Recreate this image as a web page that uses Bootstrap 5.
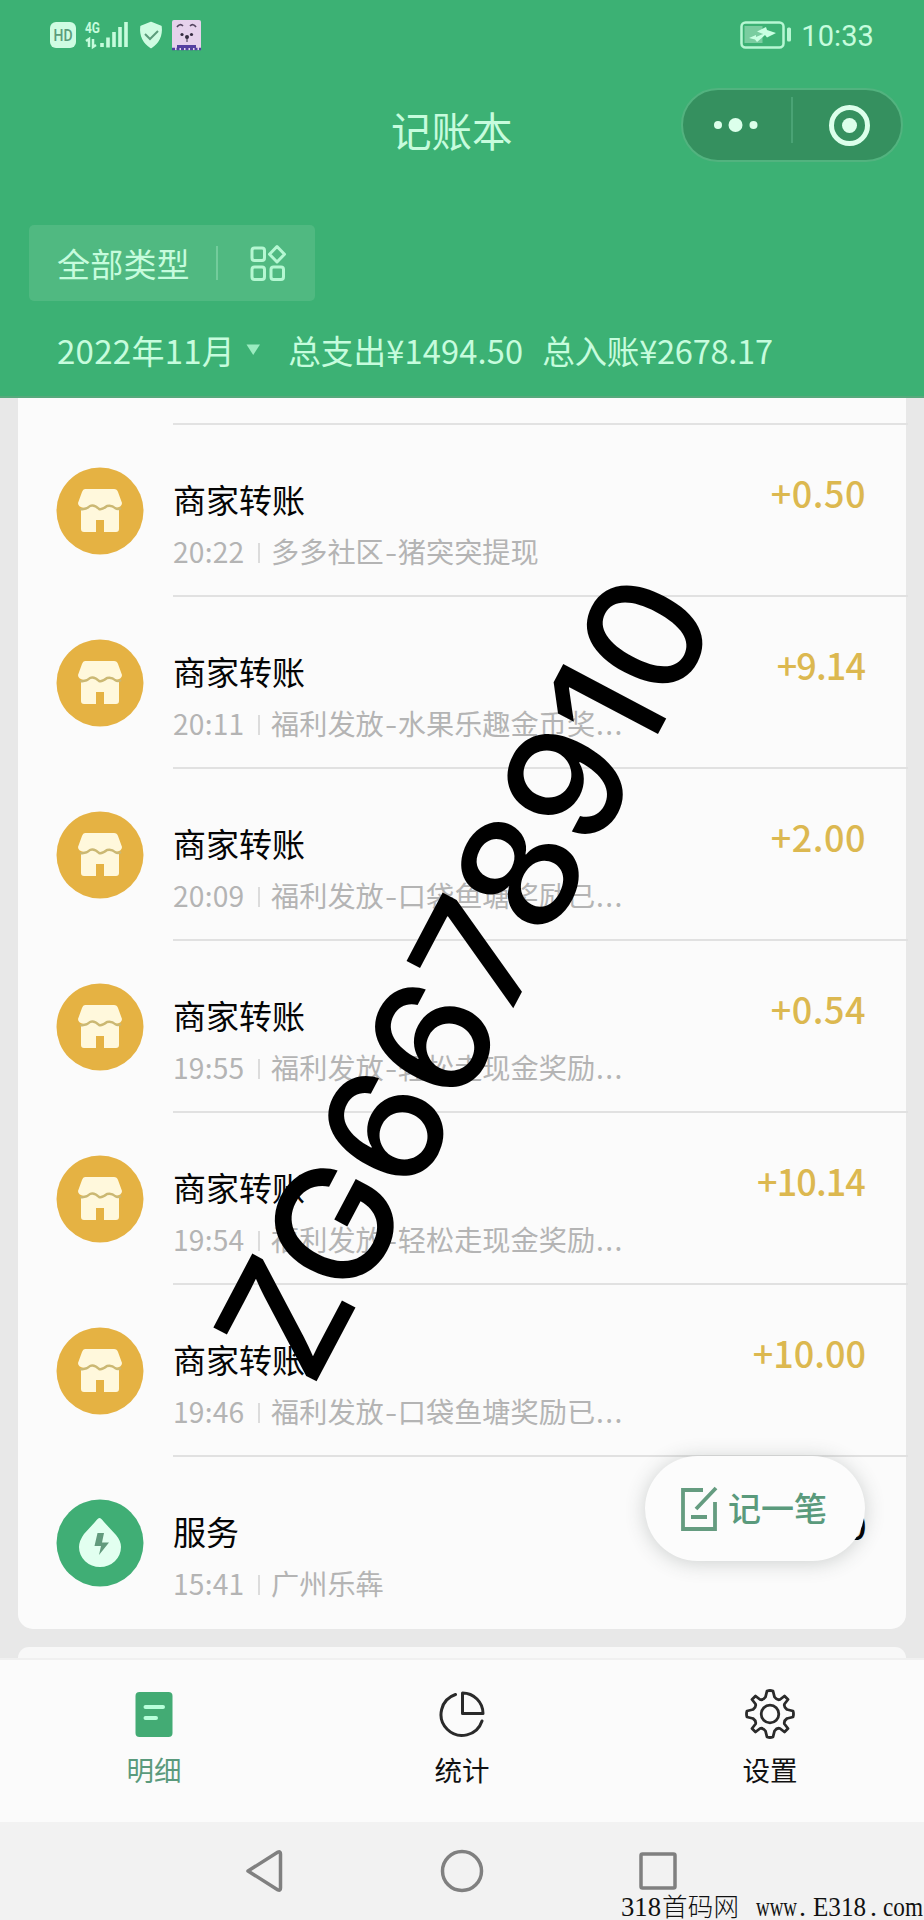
<!DOCTYPE html>
<html lang="zh-CN">
<head>
<meta charset="utf-8">
<meta name="viewport" content="width=device-width, initial-scale=1">
<title>记账本</title>
<link href="https://cdn.jsdelivr.net/npm/bootstrap@5.3.0/dist/css/bootstrap.min.css" rel="stylesheet">
<style>
  body { font-family: "Noto Sans CJK SC", sans-serif; background: #e8e8e8; color: #050505; height: 1920px; overflow: hidden; }
  svg { display: block; flex: none; }
  .app { width: 924px; height: 1920px; overflow: hidden; }
  .top-area { height: 398px; background: #3cb174; color: #c6fcdd; border-bottom: 2px solid #57a97c; }
  .status { height: 70px; padding: 14px 50px 0; }
  .clock { font-family: Roboto, sans-serif; font-size: 29px; line-height: 44px; letter-spacing: .1px; margin-left: 9px; }
  .titlebar { height: 110px; padding: 18px 21px 0 0; display: grid; grid-template-columns: 391px 1fr 222px; }
  .page-title { font-size: 40.5px; line-height: 84px; }
  .capsule { height: 74px; border-radius: 37px; background: #35905f; border: 2px solid #52b37f; }
  .filter { margin: 45px 0 0 29px; width: 286px; height: 76px; border-radius: 5px; background: #50b981; padding-left: 28px; font-size: 33px; letter-spacing: .2px; line-height: 76px; }
  .filter .sep { width: 2px; height: 34px; background: #73cc9c; margin: 0 31px 0 26px; }
  .totals { margin: 25px 0 0 57px; height: 48px; line-height: 48px; font-size: 33px; white-space: nowrap; }
  .totals .month { letter-spacing: .28px; }
  .totals .sum { font-size: 32.6px; }
  .totals .arrow { margin-left: 11px; }
  .ledger { height: 1260px; background: #e8e8e8; }
  .sheet { background: #fbfbfb; margin: 0 18px; height: 1231px; border-radius: 0 0 15px 15px; padding-top: 25px; }
  .first-rule { height: 2px; margin: 0 -2px 0 155px; background: #e2e2e2; }
  .entry { height: 172px; padding-left: 38px; gap: 29px; }
  .entry .pic { margin-top: 42px; }
  .entry .info { margin-right: -2px; padding: 50px 42px 0 0; border-bottom: 2px solid #e1e1e1; min-width: 0; }
  .entry:last-child .info { border: 0; }
  .entry .name { font-size: 33px; line-height: 48px; }
  .entry .note { font-size: 28.2px; line-height: 40px; margin-top: 8px; color: #b4b4b4; white-space: nowrap; }
  .entry .note time { width: 72px; letter-spacing: .2px; }
  .entry .note i { width: 2px; height: 20px; background: #dcdcdc; margin: 3px 11px 0 13px; }
  .entry .note b { font-weight: 400; width: 14px; text-align: center; transform: scaleX(1.25); }
  .entry .note u { text-decoration: none; letter-spacing: 1.4px; padding-left: 1px; }
  .entry .sum { font-size: 36px; line-height: 46px; font-weight: 500; color: #dcb850; margin-top: -6px; letter-spacing: .5px; }
  .entry .tight { letter-spacing: -.9px; margin-right: 1px; }
  .sheet-next { margin: 18px 18px 0; height: 11px; background: #f8f8f8; border-radius: 15px 15px 0 0; }
  .tabs { height: 164px; background: #fbfbfb; border-top: 2px solid #f0f0f0; font-size: 27.5px; }
  .tabs a { color: #111; text-decoration: none; padding-top: 27px; }
  .tabs a.active { color: #5a9a7c; }
  .tabs span { line-height: 40px; margin-top: 8px; }
  .sysnav { height: 98px; background: #f2f2f2; padding-top: 26px; }
  .fab { left: 645px; top: 1456px; width: 220px; height: 105px; border-radius: 53px; background: #fcfcfc; box-shadow: 0 2px 20px rgba(60,70,65,.24); color: #5a9a7c; font-size: 33px; font-weight: 500; padding-left: 35px; gap: 10px; }
  .fab span { line-height: 48px; margin-top: -4px; }
  .overlay { left: 0; top: 0; pointer-events: none; }
</style>
</head>
<body>
<svg width="0" height="0" class="position-absolute">
  <symbol id="shop" viewBox="0 0 88 88">
    <circle cx="44" cy="44" r="43.500" fill="#e5b243"/>
    <path d="M29 22H58Q61 22 62 25L66 36Q66 40 60 41H28Q22 40 22 36L26 25Q27 22 29 22Z" fill="#fff8dc"/>
    <path d="M25 41H63V62Q63 65 60 65H48V53H40V65H28Q25 65 25 62Z" fill="#fff8dc"/>
    <path d="M24 42Q30 43 34 39Q38 37 43 42Q46 43 51 39Q56 38 59 41Q62 43 65 41" fill="none" stroke="#cbb873" stroke-width="2.4"/>
  </symbol>
</svg>
<div class="app position-relative d-flex flex-column">
  <header class="top-area flex-shrink-0">
    <div class="status d-flex justify-content-between">
      <svg width="156" height="40" viewBox="50 14 156 40">
        <rect x="50" y="22" width="26" height="26" rx="6" fill="#cffce2"/>
        <text x="63" y="41" text-anchor="middle" font-family="Roboto" font-size="16" font-weight="500" fill="#5c9c7b" textLength="19" lengthAdjust="spacingAndGlyphs">HD</text>
        <text x="85" y="33" font-family="Roboto" font-size="15" font-weight="700" fill="#c6fcdd" textLength="15" lengthAdjust="spacingAndGlyphs">4G</text>
        <path d="M86 41l3-2v8M93 39v8l3-2" fill="none" stroke="#c6fcdd" stroke-width="2.5"/>
        <path d="M102 43v4M108 37.500v10M114 32v15M120 27v20M126 22v25" stroke="#c6fcdd" stroke-width="3.600" fill="none"/>
        <path d="M151 22.500L161 26.500Q162.500 40 151 47.500Q139.500 40 141 26.500Z" fill="#cffce2" stroke="#cffce2" stroke-width="1.500" stroke-linejoin="round"/>
        <path d="M145 34l5 5 8-8" fill="none" stroke="#5c9c7b" stroke-width="2"/>
        <rect x="172" y="20" width="29" height="30" rx="2" fill="#e6d2ec"/>
        <path d="M177 27q3-4 6-1M190 26q3-3 6 1" fill="none" stroke="#53455f" stroke-width="1.700"/>
        <circle cx="182" cy="34.500" r="1.600" fill="#352c40"/><circle cx="191.500" cy="34.500" r="1.600" fill="#352c40"/><circle cx="187" cy="37" r="2" fill="#352c40"/>
        <path d="M187 38v4" stroke="#352c40"/>
        <path d="M177 45H196V48H177Z" fill="#5540a0"/><path d="M172 49H201" stroke="#5540a0" stroke-width="2.500" stroke-dasharray="3 1.500"/>
      </svg>
      <div class="d-flex">
        <svg width="52" height="40" viewBox="740 14 52 40">
          <rect x="741.500" y="22.500" width="42" height="25" rx="4" fill="none" stroke="#b7f7d3" stroke-width="2.500"/>
          <rect x="744.500" y="26" width="18" height="17" fill="#7acda0"/>
          <path d="M749 38l7-3v2l7-3-6-2.500 9-4.500 1 3 9 3-9 4.500-2-2.500-8 7-2-2.500Z" fill="#c9ffe2"/>
          <rect x="787" y="27.500" width="4" height="14" rx="1.500" fill="#b7f7d3"/>
        </svg>
        <div class="clock">10:33</div>
      </div>
    </div>
    <div class="titlebar">
      <div></div>
      <h1 class="page-title m-0 fw-normal">记账本</h1>
      <div class="capsule">
        <svg width="218" height="70" viewBox="683 90 218 70">
          <g fill="#dcffeb"><circle cx="718" cy="125" r="4"/><circle cx="735.500" cy="125" r="7"/><circle cx="753.500" cy="125" r="4"/><circle cx="849.500" cy="125.500" r="7.500"/></g>
          <path d="M792 97v46" stroke="#4aa375" stroke-width="2"/>
          <circle cx="849.500" cy="125.500" r="18" fill="none" stroke="#dcffeb" stroke-width="5"/>
        </svg>
      </div>
    </div>
    <div class="filter d-flex align-items-center">全部类型<span class="sep"></span>
      <svg width="38" height="38" viewBox="0 0 38 38" fill="none" stroke="#b5f7d2" stroke-width="3">
        <rect x="3" y="4" width="12.500" height="12.500" rx="2.500"/><path d="M28 2.500L35.500 10.300 28 18 20.500 10.300Z" stroke-linejoin="round"/><rect x="3" y="23" width="12.500" height="12.500" rx="2.500"/><rect x="22" y="23" width="12.500" height="12.500" rx="2.500"/>
      </svg>
    </div>
    <div class="totals d-flex align-items-center">
      <span class="month">2022年11月</span>
      <svg class="arrow" width="15" height="12"><path d="M0.500 0.500H14L7.200 11Z" fill="#9aecc0"/></svg>
      <span class="sum" style="margin-left:27px;letter-spacing:.15px">总支出¥1494.50</span>
      <span class="sum" style="margin-left:19px;letter-spacing:-.25px">总入账¥2678.17</span>
    </div>
  </header>

  <main class="ledger flex-shrink-0">
    <section class="sheet">
      <div class="first-rule"></div>
      <div class="entry d-flex"><svg class="pic" width="88" height="88"><use href="#shop"/></svg><div class="info flex-grow-1 d-flex justify-content-between"><div><div class="name">商家转账</div><div class="note d-flex align-items-center"><time>20:22</time><i></i>多多社区<b>-</b>猪突突提现</div></div><div class="sum">+0.50</div></div></div>
      <div class="entry d-flex"><svg class="pic" width="88" height="88"><use href="#shop"/></svg><div class="info flex-grow-1 d-flex justify-content-between"><div><div class="name">商家转账</div><div class="note d-flex align-items-center"><time>20:11</time><i></i>福利发放<b>-</b>水果乐趣金币奖<u>...</u></div></div><div class="sum tight">+9.14</div></div></div>
      <div class="entry d-flex"><svg class="pic" width="88" height="88"><use href="#shop"/></svg><div class="info flex-grow-1 d-flex justify-content-between"><div><div class="name">商家转账</div><div class="note d-flex align-items-center"><time>20:09</time><i></i>福利发放<b>-</b>口袋鱼塘奖励已<u>...</u></div></div><div class="sum">+2.00</div></div></div>
      <div class="entry d-flex"><svg class="pic" width="88" height="88"><use href="#shop"/></svg><div class="info flex-grow-1 d-flex justify-content-between"><div><div class="name">商家转账</div><div class="note d-flex align-items-center"><time>19:55</time><i></i>福利发放<b>-</b>轻松走现金奖励<u>...</u></div></div><div class="sum">+0.54</div></div></div>
      <div class="entry d-flex"><svg class="pic" width="88" height="88"><use href="#shop"/></svg><div class="info flex-grow-1 d-flex justify-content-between"><div><div class="name">商家转账</div><div class="note d-flex align-items-center"><time>19:54</time><i></i>福利发放<b>-</b>轻松走现金奖励<u>...</u></div></div><div class="sum tight">+10.14</div></div></div>
      <div class="entry d-flex"><svg class="pic" width="88" height="88"><use href="#shop"/></svg><div class="info flex-grow-1 d-flex justify-content-between"><div><div class="name">商家转账</div><div class="note d-flex align-items-center"><time>19:46</time><i></i>福利发放<b>-</b>口袋鱼塘奖励已<u>...</u></div></div><div class="sum" style="letter-spacing:0">+10.00</div></div></div>
      <div class="entry d-flex">
        <svg class="pic" width="88" height="88"><circle cx="44" cy="44" r="43.500" fill="#40ae75"/><path d="M43.500 19Q45 19 48 23L60 36Q65 42 65 48A21 20 0 0 1 23 48Q23 42 28 35L39 23Q42 19 43.500 19Z" fill="#e2fff0"/><path d="M41.500 34h6.500l-2 9.500h7L43 56l2-9H38.500Z" fill="#629a7d"/></svg>
        <div class="info flex-grow-1 d-flex justify-content-between"><div><div class="name">服务</div><div class="note d-flex align-items-center"><time>15:41</time><i></i>广州乐犇</div></div><div class="sum text-black" style="margin-right:-1px">0</div></div>
      </div>
    </section>
    <div class="sheet-next"></div>
  </main>

  <nav class="tabs d-flex flex-shrink-0">
    <a href="#" class="active w-100 d-flex flex-column align-items-center">
      <svg width="48" height="54" viewBox="0 0 48 54"><rect x="5.500" y="5" width="37" height="45" rx="4" fill="#43ab74"/><path d="M15.500 20h17.500M15.500 31h10.500" stroke="#b8ffda" stroke-width="4" stroke-linecap="round"/></svg>
      <span>明细</span></a>
    <a href="#" class="w-100 d-flex flex-column align-items-center">
      <svg width="48" height="54" viewBox="0 0 48 54" fill="none" stroke="#2a2a2a" stroke-width="3" stroke-linecap="round" stroke-linejoin="round"><path d="M17.500 7.500A21 21 0 1 0 44 34"/><path d="M24.500 6V26.500H45A20.500 20.500 0 0 0 24.500 6Z"/></svg>
      <span>统计</span></a>
    <a href="#" class="w-100 d-flex flex-column align-items-center">
      <svg width="50" height="54" viewBox="-25 -27 50 54" fill="none" stroke="#2a2a2a" stroke-width="2.800" stroke-linejoin="round"><circle r="8.800"/><path d="M-3 -23Q0 -24 3 -23L4.500 -17Q7 -13.500 10 -14.500L14.500 -18L18 -14.500L14.500 -10Q13.500 -7 17 -4.500L23 -3Q24 0 23 3L17 4.500Q13.500 7 14.500 10L18 14.500L14.500 18L10 14.500Q7 13.500 4.500 17L3 23Q0 24 -3 23L-4.500 17Q-7 13.500 -10 14.500L-14.500 18L-18 14.500L-14.500 10Q-13.500 7 -17 4.500L-23 3Q-24 0 -23 -3L-17 -4.500Q-13.500 -7 -14.500 -10L-18 -14.500L-14.500 -18L-10 -14.500Q-7 -13.500 -4.500 -17Z"/></svg>
      <span>设置</span></a>
  </nav>

  <footer class="sysnav flex-shrink-0 d-flex justify-content-center">
    <svg width="436" height="46" viewBox="244 1848 436 46" fill="none" stroke="#808080" stroke-width="3.500" stroke-linejoin="round">
      <path d="M248 1871L278 1852Q280.500 1851 280.500 1854V1888Q280.500 1891 278 1890Z"/>
      <circle cx="462" cy="1871" r="19.500"/>
      <rect x="641" y="1854" width="34" height="34" rx="1.500"/>
    </svg>
  </footer>

  <a href="#" class="fab position-absolute d-flex align-items-center text-decoration-none">
    <svg width="38" height="46" viewBox="680 1485 38 46" fill="none" stroke="#659c80" stroke-width="3.800"><path d="M703 1489H683V1528H715V1501"/><path d="M716 1487L696 1508M691 1516H707"/></svg>
    <span>记一笔</span>
  </a>

  <svg class="overlay position-absolute" width="924" height="1920">
    <text transform="translate(312 1390) rotate(-62.200)" font-family="Inter" font-size="160" font-weight="500" fill="#000" textLength="875" lengthAdjust="spacing">ZG6678910</text>
    <g font-family="'Liberation Serif'" font-size="28" fill="#111">
      <text x="621" y="1916" textLength="40" lengthAdjust="spacingAndGlyphs">318</text>
      <text x="662" y="1916" font-family="'Noto Sans CJK SC'" font-weight="300" font-size="25.500" textLength="77">首码网</text>
      <text x="756" y="1916" textLength="41" lengthAdjust="spacingAndGlyphs">www</text>
      <text x="799" y="1916">.</text>
      <text x="813" y="1916" textLength="53" lengthAdjust="spacingAndGlyphs">E318</text>
      <text x="870" y="1916">.</text>
      <text x="883" y="1916" textLength="40" lengthAdjust="spacingAndGlyphs">com</text>
    </g>
  </svg>
</div>
<script src="https://cdn.jsdelivr.net/npm/bootstrap@5.3.0/dist/js/bootstrap.bundle.min.js"></script>
</body>
</html>
